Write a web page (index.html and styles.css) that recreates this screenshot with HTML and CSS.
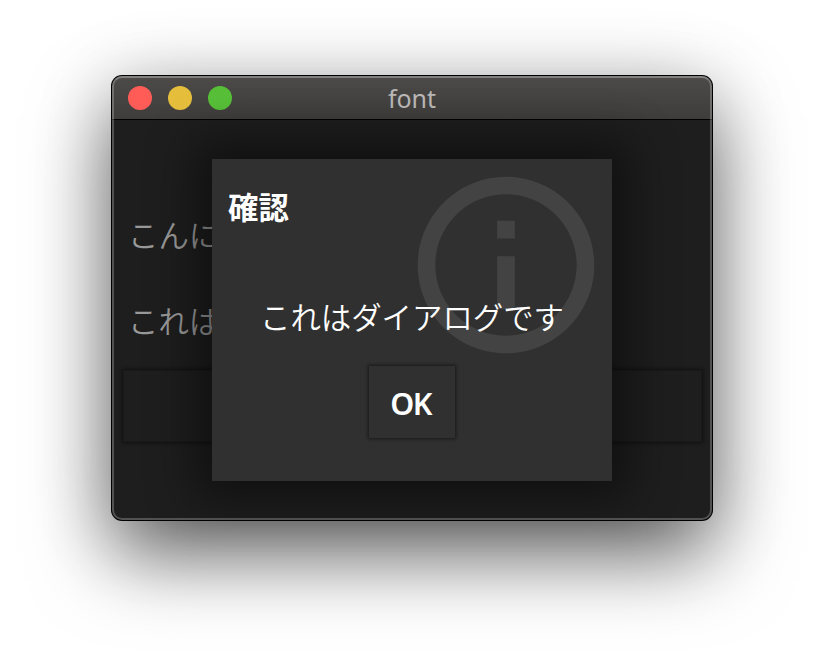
FILE: index.html
```html
<!DOCTYPE html>
<html lang="ja">
<head>
<meta charset="utf-8">
<title>font</title>
<link rel="stylesheet" href="styles.css">
</head>
<body>
<main class="window">
  <header class="titlebar">
    <div class="controls">
      <span class="control close"></span>
      <span class="control minimize"></span>
      <span class="control zoom"></span>
    </div>
    <h1 class="title">font</h1>
  </header>
  <section class="content">
    <p class="label">こんに</p>
    <p class="label">これは</p>
    <div class="wide-button"></div>
  </section>
  <section class="dialog" role="dialog">
    <svg class="info" viewBox="0 0 24 24" fill="currentColor"><path d="M11 7h2v2h-2zm0 4h2v6h-2zm1-9C6.480 2 2 6.480 2 12s4.480 10 10 10 10-4.480 10-10S17.520 2 12 2zm0 18c-4.410 0-8-3.590-8-8s3.590-8 8-8 8 3.590 8 8-3.590 8-8 8z"/></svg>
    <h2 class="heading">確認</h2>
    <p class="message">これはダイアログです</p>
    <button class="ok">OK</button>
  </section>
</main>
</body>
</html>
```

FILE: styles.css
```css
* {
  box-sizing: border-box;
}

body {
  margin: 0;
  min-height: 668px;
  padding: 76px 112px;
  background: #fff;
  overflow: hidden;
  font-family: "Noto Sans CJK JP", sans-serif;
}

.window {
  position: relative;
  width: 600px;
  height: 444px;
  border-radius: 10px;
  background: #1e1e1e;
  box-shadow: 0 0 0 1px #000, 0 36px 80px rgba(0, 0, 0, 0.55), 0 10px 80px rgba(0, 0, 0, 0.2);
}

/* Light rim drawn over the window edges */
.window::after {
  content: "";
  position: absolute;
  inset: 0;
  border: 2px solid rgba(255, 255, 255, 0.23);
  border-top-color: rgba(255, 255, 255, 0.3);
  border-radius: 10px;
  pointer-events: none;
}

.titlebar {
  display: grid;
  grid-template-columns: 1fr auto 1fr;
  align-items: center;
  height: 44px;
  padding: 0 16px;
  border-bottom: 1px solid #000;
  border-radius: 10px 10px 0 0;
  background: linear-gradient(#4d4b49, #3f3d3b);
}

.controls {
  display: flex;
  gap: 16px;
}

.control {
  width: 24px;
  height: 24px;
  border-radius: 50%;
}

.close { background: #ff5c57; }
.minimize { background: #e5bf3c; }
.zoom { background: #57c038; }

.title {
  margin: 0;
  color: #bbb9b7;
  font: 400 25px/40px "Noto Sans", sans-serif;
}

.content {
  padding: 92px 10px 0 11px;
}

.label {
  margin: 0 0 42px;
  padding-left: 5px;
  color: #999;
  font-size: 30.4px;
  font-weight: 350;
  line-height: 44px;
}

.label + .label {
  margin-bottom: 28px;
}

.wide-button {
  height: 72px;
  border: 1px solid #191919;
  box-shadow: 0 0 3px 1px #111;
}

.dialog {
  position: absolute;
  left: 100px;
  top: 83px;
  display: flex;
  flex-direction: column;
  align-items: center;
  width: 400px;
  height: 322px;
  padding: 25px 16px 0;
  background: #303030;
  color: #fff;
  box-shadow: 0 0 44px 18px rgba(0, 0, 0, 0.46);
}

.info {
  position: absolute;
  left: 188px;
  top: 0;
  width: 212px;
  height: 212px;
  color: #434343;
}

.heading {
  align-self: flex-start;
  margin: 0;
  font-size: 30.4px;
  font-weight: 700;
  line-height: 44px;
}

.message {
  position: relative;
  margin: 66px 0 0;
  font-size: 30.4px;
  font-weight: 350;
  line-height: 44px;
  white-space: nowrap;
}

.ok {
  width: 86px;
  height: 72px;
  margin-top: 28px;
  padding: 2px 3px 0 0;
  border: 0;
  background: #303030;
  color: #fff;
  font: 600 30.5px/44px "Noto Sans", sans-serif;
  letter-spacing: -1.5px;
  box-shadow: 0 0 3px 1px #181818;
}
```
